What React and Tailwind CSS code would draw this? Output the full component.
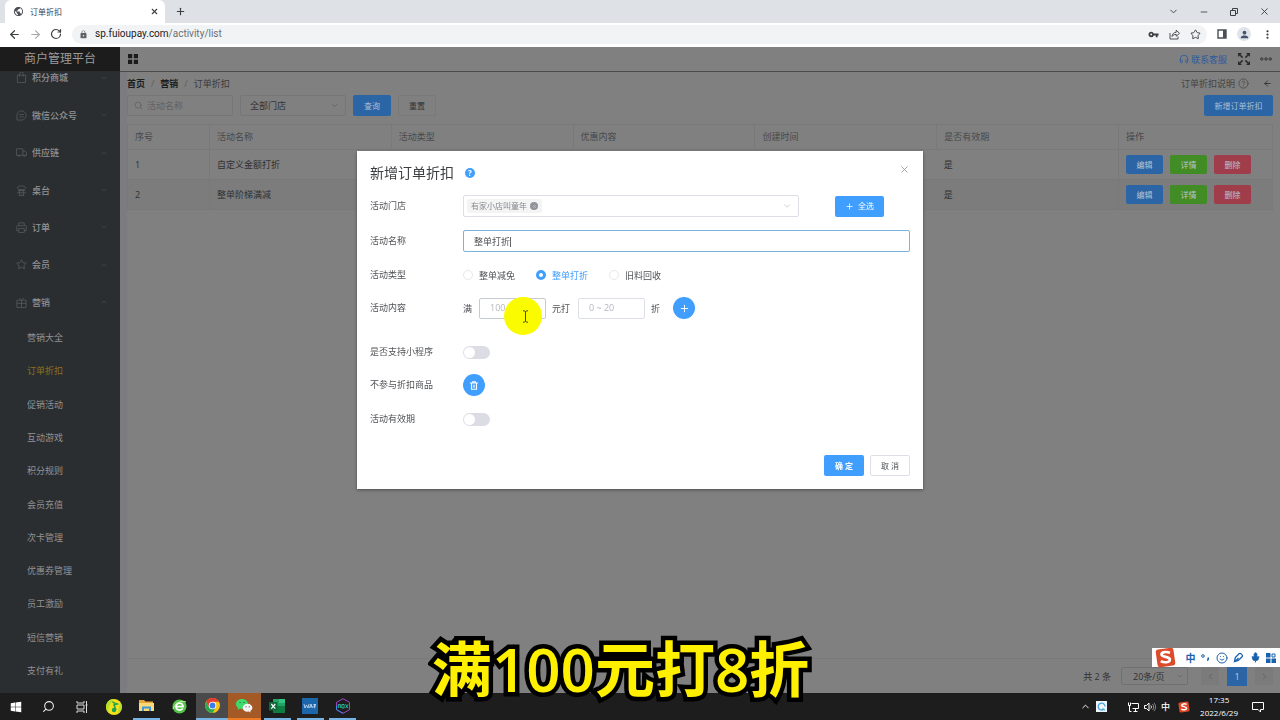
import React, { useState } from "react";
import {
  ArrowLeft,
  ArrowRight,
  ChevronDown,
  ChevronLeft,
  ChevronRight,
  ChevronUp,
  CircleHelp,
  Headphones,
  Mic,
  Minus,
  Plus,
  RotateCw,
  Search,
  Smile,
  Star,
  X,
} from "lucide-react";
import { FaWindows } from "react-icons/fa";
import { MdLock, MdPerson, MdPublic, MdVpnKey, MdMoreVert } from "react-icons/md";

// 12x12 outline icons of the side menu
const menu = [
  { label: "积分商城", path: "M1.5 3.5h9v8h-9zM4 5V2a2 2 0 0 1 4 0v3" },
  { label: "微信公众号", path: "M1 11h5a5 5 0 1 0-5-5zM3.5 5h5M3.5 7.5h5" },
  { label: "供应链", path: "M.5 2h7v7h-7zM7.5 4.5h2.5l1.5 2V9h-4M2 9a1.3 1.3 0 1 0 2.6 0M8 9a1.3 1.3 0 1 0 2.6 0" },
  { label: "桌台", path: "M1.5 3c0-1.2 2-2 4.500-2s4.500.8 4.500 2-2 2-4.500 2-4.500-.8-4.500-2zM2 6h8M1 8.500h10M4 5v6.500M8 5v6.500M3 11.500h6" },
  { label: "订单", path: "M3 4V1h6v3M1.500 4h9a.7.7 0 0 1 .7.7V9.500H9M3 9.500H.8V4.700a.7.7 0 0 1 .7-.7M3 7h6v4.500H3z" },
  { label: "会员", path: "M6 .8l1.600 3.300 3.600.5-2.600 2.500.6 3.600L6 9l-3.200 1.700.6-3.600L.8 4.600l3.600-.5z" },
  { label: "营销", path: "M1 3.500h10v8H1zM6 3.500v8M1 7h10M6 3.500L3.500 1M6 3.500L8.500 1", open: true },
];

const subMenu = [
  "营销大全",
  "订单折扣",
  "促销活动",
  "互动游戏",
  "积分规则",
  "会员充值",
  "次卡管理",
  "优惠券管理",
  "员工激励",
  "短信营销",
  "支付有礼",
];

const columns = ["序号", "活动名称", "活动类型", "优惠内容", "创建时间", "是否有效期", "操作"];

const rows = [
  { id: 1, name: "自定义金额打折", valid: "是" },
  { id: 2, name: "整单阶梯满减", valid: "是" },
];

function BrowserBar() {
  return (
    <header className="shrink-0 bg-[#dee1e6] text-[#3c4043]">
      <div className="flex h-[23px] items-center pl-[5px]">
        <div className="flex h-full w-[160px] items-center rounded-t-md bg-white pr-1.5 pl-2">
          <MdPublic size={11} className="text-[#4b4f54]" />
          <span className="ml-1.5 flex-1 text-[8px]">订单折扣</span>
          <button aria-label="关闭标签页">
            <X size={9} strokeWidth={3} />
          </button>
        </div>
        <button aria-label="新标签页" className="ml-2.5">
          <Plus size={11} strokeWidth={2.5} />
        </button>
        <div className="ml-auto flex items-center gap-5 pr-2.5">
          <button aria-label="搜索标签页"><ChevronDown size={11} /></button>
          <button aria-label="最小化"><Minus size={10} /></button>
          <button aria-label="还原">
            <svg width="10" height="10" viewBox="0 0 10 10" fill="none" stroke="currentColor">
              <path d="M1.5 3.5h5v5h-5zM3.5 3.5v-2h5v5h-2" />
            </svg>
          </button>
          <button aria-label="关闭"><X size={11} /></button>
        </div>
      </div>
      <div className="flex h-6 items-center bg-white pr-1.5 pb-0.5 pl-2">
        <div className="flex w-[64px] items-center gap-2">
          <button aria-label="后退"><ArrowLeft size={13} strokeWidth={2.2} /></button>
          <button aria-label="前进"><ArrowRight size={13} className="text-[#a7a9ac]" /></button>
          <button aria-label="刷新"><RotateCw size={12} strokeWidth={2.4} /></button>
        </div>
        <div className="flex h-[19px] flex-1 items-center rounded-full bg-[#f1f3f4] pr-1.5 pl-[7px]">
          <MdLock size={9} className="text-[#5f6368]" />
          <span className="ml-[7px] flex-1 font-['Roboto',sans-serif] text-[10px] text-[#6b6f74]">
            <span className="text-[#202124]">sp.fuioupay.com</span>/activity/list
          </span>
          <div className="flex items-center gap-2.5">
            <MdVpnKey size={11} />
            <svg width="11" height="11" viewBox="0 0 11 11" fill="none" stroke="currentColor" strokeWidth=".9">
              <path d="M1 4v6h8V7.500M3 7.500c.3-2.700 1.700-4 4.200-4.200V1.200L10.500 4.300 7.200 7.200V5.400C5.300 5.400 4 6 3 7.500z" />
            </svg>
            <Star size={11} />
          </div>
        </div>
        <div className="ml-2.5 flex items-center gap-2.5">
          <svg width="10" height="10" viewBox="0 0 10 10" aria-hidden="true">
            <path d="M1 1h8v8H1z" fill="none" stroke="#4b4f54" strokeWidth="1.4" />
            <path d="M6 1h3v8H6z" fill="#4b4f54" />
          </svg>
          <span className="flex size-[14px] items-center justify-center rounded-full bg-[#dfe3ea]">
            <MdPerson size={11} className="text-[#44546b]" />
          </span>
          <MdMoreVert size={13} />
        </div>
      </div>
    </header>
  );
}

function Sidebar() {
  return (
    <aside className="flex w-[120px] shrink-0 flex-col bg-[#2b2e31] text-[9px] text-[#919294]">
      <h1 className="flex h-6 shrink-0 items-center justify-center bg-[#1c1c1d] text-[12px] text-[#9b9b9b]">
        商户管理平台
      </h1>
      <nav className="flex min-h-0 flex-1 flex-col overflow-hidden pb-1.5">
        <div className="-mt-3 flex flex-1 flex-col">
          {menu.map(({ label, path, open }) => (
            <a key={label} href="#" className="flex min-h-0 grow-[9] basis-0 items-center pr-3 pl-4 font-medium">
              <svg width="11" height="11" viewBox="0 0 12 12" fill="none" stroke="#55595c" strokeWidth=".9">
                <path d={path} />
              </svg>
              <span className="ml-[5px] flex-1">{label}</span>
              {open ? (
                <ChevronUp size={8} className="text-[#4a4e51]" />
              ) : (
                <ChevronDown size={8} className="text-[#4a4e51]" />
              )}
            </a>
          ))}
          {subMenu.map((label) => (
            <a
              key={label}
              href="#"
              className={`flex min-h-0 grow-[8] basis-0 items-center pl-[27px] ${
                label === "订单折扣" ? "text-[#8a711c]" : ""
              }`}
            >
              {label}
            </a>
          ))}
        </div>
      </nav>
    </aside>
  );
}

function TopBar() {
  return (
    <div className="flex h-[25px] shrink-0 items-center border-b border-[#4c4c4c] pr-2 pl-2">
      <button aria-label="菜单">
        <svg width="10" height="10" viewBox="0 0 10 10" fill="#1b1b1b">
          <path d="M0 0h4.2v4.2H0zM5.8 0H10v4.2H5.8zM0 5.8h4.2V10H0zM5.8 5.8H10V10H5.8z" />
        </svg>
      </button>
      <a href="#" className="ml-auto flex items-center gap-0.5 text-[9px] text-[#2b5aa0]">
        <Headphones size={10} />
        联系客服
      </a>
      <button aria-label="全屏" className="ml-[11px]">
        <svg width="12" height="12" viewBox="0 0 12 12" fill="#2b2b2b" stroke="#2b2b2b">
          <path d="M0 0h4L0 4zM12 0v4L8 0zM0 12V8l4 4zM12 12H8l4-4z" stroke="none" />
          <path d="M1 1l3.6 3.6M11 1L7.4 4.6M1 11l3.6-3.6M11 11L7.4 7.4" strokeWidth="1.5" />
        </svg>
      </button>
      <button aria-label="更多" className="ml-2.5">
        <svg width="12" height="4" viewBox="0 0 12 4" fill="none" stroke="#333">
          <circle cx="1.8" cy="2" r="1.2" />
          <circle cx="6" cy="2" r="1.2" />
          <circle cx="10.2" cy="2" r="1.2" />
        </svg>
      </button>
    </div>
  );
}

function ListPage() {
  return (
    <div className="flex min-h-0 flex-1 flex-col border-l-[7px] border-[#7c7b80]">
      <div className="flex h-[23px] shrink-0 items-center pr-2 text-[9px]">
        <nav className="flex items-center gap-1.5 text-[#3a3a3a]">
          <a href="#" className="font-bold text-[#1e1e1e]">首页</a>
          <span className="text-[#5c5c5c]">/</span>
          <a href="#" className="font-bold text-[#1e1e1e]">营销</a>
          <span className="text-[#5c5c5c]">/</span>
          <span>订单折扣</span>
        </nav>
        <a href="#" className="ml-auto flex items-center gap-[3px] text-[#444]">
          订单折扣说明
          <CircleHelp size={11} strokeWidth={1.6} />
        </a>
        <button aria-label="返回" className="ml-3.5">
          <ArrowLeft size={9} className="text-[#222]" />
        </button>
      </div>

      {/* Filters */}
      <div className="flex h-[21px] shrink-0 items-center gap-[7px] pr-[7px] text-[8px]">
        <label className="flex h-full w-[106px] items-center gap-1 rounded-xs border border-[#767678] pl-1.5 text-[#606060]">
          <Search size={9} className="shrink-0" />
          <input
            aria-label="活动名称"
            placeholder="活动名称"
            className="w-full min-w-0 bg-transparent text-[9px] outline-none placeholder:text-[#626264]"
          />
        </label>
        <div className="relative h-full w-[106px]">
          <select
            aria-label="门店"
            className="h-full w-full appearance-none rounded-xs border border-[#767678] pl-[9px] text-[9px] text-[#323232]"
          >
            <option>全部门店</option>
          </select>
          <ChevronDown size={9} className="pointer-events-none absolute top-1.5 right-[7px] text-[#606060]" />
        </div>
        <button className="h-full w-[38px] rounded-xs bg-[#2b65a5] text-[#a9bfd8]">查询</button>
        <button className="h-full w-[38px] rounded-xs border border-[#797979] text-[#333]">重置</button>
        <button className="ml-auto h-full w-[69px] rounded-xs bg-[#2b65a5] text-[#a9bfd8]">新增订单折扣</button>
      </div>

      <div className="mt-2 min-h-0 flex-1 pr-[7px]">
        <table className="w-full table-fixed border-collapse border border-[#797979] text-left text-[9px] text-[#303132]">
          <thead>
            <tr className="h-[25px] border-b border-[#797979] text-[#48494b]">
              {columns.map((name, i) => (
                <th
                  key={name}
                  className={`border-r border-[#797979] pb-0.5 pl-[7px] font-normal ${
                    i === 0 ? "w-[82px]" : i === 6 ? "w-[154px]" : ""
                  }`}
                >
                  {name}
                </th>
              ))}
            </tr>
          </thead>
          <tbody>
            {rows.map((row) => (
              <tr key={row.id} className="h-[30px] border-b border-[#797979] even:bg-[#7c7c7c]">
                <td className="border-r border-[#797979] pl-[7px]">{row.id}</td>
                <td className="pl-[7px]">{row.name}</td>
                <td />
                <td />
                <td />
                <td className="pl-[7px]">{row.valid}</td>
                <td className="border-l border-[#797979] pl-[7px]">
                  <div className="flex gap-[7px] text-[8px] text-[#b8c4d2]">
                    <button className="h-[19px] w-[37px] rounded-xs bg-[#2b65a5]">编辑</button>
                    <button className="h-[19px] w-[37px] rounded-xs bg-[#428c25]">详情</button>
                    <button className="h-[19px] w-[37px] rounded-xs bg-[#a03d4a]">删除</button>
                  </div>
                </td>
              </tr>
            ))}
          </tbody>
        </table>
      </div>

      <div className="flex h-[35px] shrink-0 items-center justify-end border-t border-[#797979] pr-[7px] text-[9px] text-[#303132]">
        <span>共 2 条</span>
        <div className="relative ml-2.5 h-[18px] w-[67px]">
          <select
            aria-label="每页条数"
            className="h-full w-full appearance-none rounded-xs border border-[#707072] pl-[11px] text-[9px]"
          >
            <option>20条/页</option>
          </select>
          <ChevronDown size={8} className="pointer-events-none absolute top-[5px] right-1 text-[#606060]" />
        </div>
        <div className="ml-[13px] flex items-center gap-2">
          <button aria-label="上一页" className="flex size-[18px] items-center justify-center bg-[#7b7b7c]">
            <ChevronLeft size={9} className="text-[#5b5b5d]" />
          </button>
          <button className="h-[19px] w-5 bg-[#2b65a5] text-[#c3cbd4]">1</button>
          <button aria-label="下一页" className="flex size-[18px] items-center justify-center bg-[#7b7b7c]">
            <ChevronRight size={9} className="text-[#5b5b5d]" />
          </button>
        </div>
      </div>
    </div>
  );
}

function Switch({ id }) {
  return (
    <input
      id={id}
      type="checkbox"
      role="switch"
      className="relative h-[13px] w-[27px] appearance-none rounded-full bg-[#dcdce4] before:absolute before:top-px before:left-px before:size-[11px] before:rounded-full before:bg-white checked:bg-[#409eff] checked:before:left-[15px]"
    />
  );
}

function Row({ label, htmlFor, className = "mt-3", children }) {
  return (
    <div className={`flex h-[22px] items-center ${className}`}>
      <label htmlFor={htmlFor} className="w-[93px] shrink-0 pb-px">{label}</label>
      {children}
    </div>
  );
}

function DiscountDialog() {
  const [name, setName] = useState("整单打折");
  const [type, setType] = useState("整单打折");

  return (
    <div className="fixed inset-0 z-10 flex items-start justify-center pt-[151px]">
      <section
        role="dialog"
        aria-label="新增订单折扣"
        className="w-[566px] bg-white px-[13px] pb-[13px] text-[9px] text-[#505256] shadow-[0_1px_3px_rgba(0,0,0,0.4)]"
      >
        <div className="flex h-11 items-center">
          <h2 className="text-[14px] text-[#3c3e42]">新增订单折扣</h2>
          <span className="ml-[11px] flex size-[10px] items-center justify-center rounded-full bg-[#409eff] text-[8px] font-bold text-white">
            ?
          </span>
          <button aria-label="关闭" className="mb-2 ml-auto">
            <X size={11} strokeWidth={1.8} className="text-[#909399]" />
          </button>
        </div>

        <Row label="活动门店" htmlFor="store" className="mt-0">
          <div className="flex h-full w-[336px] items-center rounded-xs border border-[#dcdfe6] pr-1.5 pl-[3px]">
            <span className="flex h-[14px] items-center gap-[3px] rounded-xs bg-[#f4f4f5] px-1 text-[8px] text-[#85888e]">
              有家小店叫童年
              <button aria-label="移除" className="flex size-2 items-center justify-center rounded-full bg-[#909399]">
                <X size={5} className="text-[#ddd]" />
              </button>
            </span>
            <input id="store" role="combobox" aria-expanded="false" className="min-w-0 flex-1 outline-none" />
            <ChevronDown size={10} strokeWidth={1.6} className="text-[#b4b8c0]" />
          </div>
          <button className="ml-9 flex h-[21px] w-[49px] items-center justify-center gap-1 rounded-xs bg-[#409eff] text-[8px] text-white">
            <Plus size={9} />
            全选
          </button>
        </Row>

        <Row label="活动名称" htmlFor="name" className="mt-[13px]">
          <div className="flex h-full flex-1 items-center rounded-xs border border-[#7ab3dd] pl-2.5">
            <span className="relative flex-1">
              <input
                id="name"
                value={name}
                onChange={(e) => setName(e.target.value)}
                className="w-full outline-none"
              />
              <span className="absolute top-0.5 left-9 h-2.5 w-px bg-[#666]" />
            </span>
          </div>
        </Row>

        <Row label="活动类型">
          {["整单减免", "整单打折", "旧料回收"].map((item) => (
            <label
              key={item}
              className={`flex w-[73px] items-center gap-1.5 ${type === item ? "text-[#409eff]" : ""}`}
            >
              <input
                type="radio"
                name="type"
                checked={type === item}
                onChange={() => setType(item)}
                className="size-[10px] appearance-none rounded-full border border-[#e6e8ec] bg-white checked:border-[3px] checked:border-[#409eff]"
              />
              {item}
            </label>
          ))}
        </Row>

        <Row label="活动内容" htmlFor="amount" className="mt-[11px]">
          <div className="relative flex items-center gap-1.5">
            <span className="w-2.5">满</span>
            <input
              id="amount"
              placeholder="100"
              className="h-[21px] w-[67px] rounded-xs border border-[#c6cad1] pb-px pl-2.5 outline-none placeholder:text-[#b4b7bd]"
            />
            <span className="w-5">元打</span>
            <input
              aria-label="折扣"
              placeholder="0 ~ 20"
              className="h-[21px] w-[67px] rounded-xs border border-[#dcdfe6] pb-px pl-2.5 outline-none placeholder:text-[#b4b7bd]"
            />
            <span className="w-2.5">折</span>
            <button
              aria-label="添加"
              className="ml-1.5 flex size-[22px] items-center justify-center rounded-full bg-[#409eff] text-white"
            >
              <Plus size={11} />
            </button>
            {/* Pointer highlight */}
            <span className="absolute top-0 left-[41px] flex size-[38px] items-center justify-center rounded-full bg-[#fbfb00] pl-1">
              <svg width="7" height="13" viewBox="0 0 7 13" fill="none" stroke="#4c4c10">
                <path d="M1 .8c1.5 0 2.5.3 2.5 1.2C3.5 1.1 4.5.8 6 .8M3.5 2v9M1 12.2c1.5 0 2.5-.3 2.5-1.2 0 .9 1 1.2 2.5 1.2" />
              </svg>
            </span>
          </div>
        </Row>

        <Row label="是否支持小程序" htmlFor="mini" className="mt-[22px]">
          <Switch id="mini" />
        </Row>

        <Row label="不参与折扣商品" className="mt-[11px]">
          <button
            aria-label="选择商品"
            className="flex size-[22px] items-center justify-center rounded-full bg-[#409eff]"
          >
            <svg width="8" height="9" viewBox="0 0 8 9" fill="none" stroke="#fff">
              <path d="M0 2h8M2.7 2V.7h2.6V2M1.5 2.500v5.800h5V2.500" strokeWidth="1.1" />
              <path d="M3.4 3.700v3M4.600 3.700v3" strokeWidth=".7" />
            </svg>
          </button>
        </Row>

        <Row label="活动有效期" htmlFor="period">
          <Switch id="period" />
        </Row>

        <div className="mt-[25px] flex justify-end gap-1.5 text-[8px]">
          <button className="h-[21px] w-10 rounded-xs bg-[#409eff] font-bold text-white">确 定</button>
          <button className="h-[21px] w-10 rounded-xs border border-[#dcdfe6]">取 消</button>
        </div>
      </section>
    </div>
  );
}

function SogouLogo({ size }) {
  return (
    <svg width={size} height={size} viewBox="0 0 20 20">
      <rect x="1.5" y="1.5" width="17" height="17" rx="2.5" fill="#dc4a2a" transform="rotate(-8 10 10)" />
      <path
        d="M14.3 5.6C11 4.2 6 4.6 6.2 7.2c.2 2.8 8 1.6 8 4.7 0 3-5.5 3.3-8.7 1.6"
        fill="none"
        stroke="#fff"
        strokeWidth="2.5"
      />
    </svg>
  );
}

function ImeBar() {
  return (
    <div className="fixed right-0 bottom-[53px] z-20 flex h-[19px] w-[128px] items-center justify-between bg-white pr-1 pl-[3px] text-[#1b62ad]">
      <SogouLogo size={21} />
      <span className="ml-1 text-[10px] font-bold">中</span>
      <svg width="9" height="9" viewBox="0 0 9 9" fill="none" stroke="currentColor">
        <circle cx="2" cy="3" r="1.3" />
        <path d="M7 4.5c.6 1.2.2 2.4-.9 3" strokeWidth="1.6" />
      </svg>
      <Smile size={12} />
      <svg width="11" height="11" viewBox="0 0 11 11" fill="none" stroke="currentColor" strokeWidth="1.3">
        <path d="M1.5 9.5l.8-4 4-4c1-.8 3.8 1.5 3 3l-4 4zM2 9.5L5.5 6" />
      </svg>
      <Mic size={11} fill="currentColor" />
      <svg width="10" height="10" viewBox="0 0 10 10" fill="currentColor">
        <path d="M0 0h4.5v4.5H0zM0 5.5h4.5V10H0zM5.5 5.5H10V10H5.5z" />
        <path d="M6 1h3v3H6z" fill="none" stroke="currentColor" />
      </svg>
    </div>
  );
}

const tasks = [
  { name: "开始", icon: <FaWindows size={12} color="#fff" /> },
  { name: "搜索", icon: <Search size={13} color="#eee" className="-scale-x-100" /> },
  {
    name: "任务视图",
    icon: (
      <svg width="12" height="12" viewBox="0 0 12 12" fill="none" stroke="#ddd">
        <path d="M1 0v2h7V0M1 12v-2h7v2M1 4h7v4H1zM10.5 0v12M9.5 4h2" />
      </svg>
    ),
  },
  {
    name: "音乐",
    icon: (
      <svg width="16" height="16" viewBox="0 0 16 16">
        <circle cx="8" cy="8" r="8" fill="#f8e01c" />
        <path d="M8 0a8 8 0 0 0-5 14.2C1 9 5 4 8 0zM14.5 3.5c2 4 1.5 8-2 11.3-1-4 1-7 2-11.3z" fill="#b5e02c" />
        <path d="M6.5 2.5c.5 1.5 3 2 4.5 2.5L8 6l2 5" fill="none" stroke="#1da34e" strokeWidth="1.5" />
        <circle cx="8" cy="11" r="2.2" fill="#1da34e" />
      </svg>
    ),
  },
  {
    name: "文件资源管理器",
    bar: true,
    icon: (
      <svg width="15" height="13" viewBox="0 0 15 13">
        <path d="M0 1h5l1.5 1.5H14V12H0z" fill="#e9a83a" />
        <path d="M0 4h15v8H0z" fill="#fbd977" />
        <path d="M3 12V7.5h9V12h-2V9.5H5V12z" fill="#3f97d8" />
      </svg>
    ),
  },
  {
    name: "浏览器",
    icon: (
      <svg width="15" height="15" viewBox="0 0 15 15">
        <circle cx="7.5" cy="7.5" r="7" fill="#55c44a" />
        <path d="M4 7.6h7c0-5-7-4.5-7 0 0 4 5 4.3 6.8 2" fill="none" stroke="#fff" strokeWidth="1.7" />
        <path d="M1 10C3 4 9 1 14 3" fill="none" stroke="#c8f0a8" />
      </svg>
    ),
  },
  {
    name: "Chrome",
    bar: true,
    tile: "bg-[#4a4a4b]",
    icon: (
      <svg width="15" height="15" viewBox="0 0 16 16">
        <circle cx="8" cy="8" r="8" fill="#fbc116" />
        <path d="M1.1 4A8 8 0 0 1 15 4H8L4.6 10z" fill="#e33b2e" />
        <path d="M1.1 4A8 8 0 0 0 8 16l3.5-6H4.6z" fill="#2da94f" />
        <circle cx="8" cy="8" r="4" fill="#fff" />
        <circle cx="8" cy="8" r="3.1" fill="#3b7ded" />
      </svg>
    ),
  },
  {
    name: "微信",
    bar: true,
    tile: "bg-[#a35a26]",
    line: "bg-[#ef7a22]",
    icon: (
      <svg width="17" height="14" viewBox="0 0 17 14">
        <path d="M6 0C2.5 0 0 2.2 0 5c0 1.6.9 3 2.2 3.9L1.7 11l2.2-1.2C8.5 10.6 12 8.2 12 5c0-2.8-2.5-5-6-5z" fill="#3ddb6d" />
        <path d="M11.5 4.8C8.8 4.8 6.6 6.5 6.6 8.8c0 2.7 2.9 4.4 6.2 3.8l1.9 1-.4-1.7c1.3-.8 2.1-1.9 2.1-3.1 0-2.3-2.2-4-4.9-4z" fill="#f4f4f4" />
        <path d="M3.5 3.5h1M7.5 3.5h1M9.5 7.8h1M12.7 7.8h1" stroke="#444" />
      </svg>
    ),
  },
  {
    name: "Excel",
    bar: true,
    icon: (
      <svg width="16" height="14" viewBox="0 0 16 14">
        <path d="M4 0h12v14H4z" fill="#21a366" />
        <path d="M10 0h6v4h-6z" fill="#33c481" />
        <path d="M4 7h12v7H4z" fill="#107c41" />
        <path d="M0 3h8.5v8.5H0z" fill="#0e6b38" />
        <path d="M2.3 5l4 4.6M6.3 5l-4 4.6" stroke="#fff" strokeWidth="1.2" />
      </svg>
    ),
  },
  {
    name: "水印",
    bar: true,
    icon: (
      <svg width="16" height="16" viewBox="0 0 16 16">
        <path d="M0 0h16v16H0z" fill="#1c66ac" />
        <path d="M2 6l1 4 1.5-3L6 10l1-4M7.5 10L9 6l1.500 4M8 8.800h2.300M11.500 6.500H14M12.700 6v4l-1.200-1M11.500 8H14" fill="none" stroke="#cfe3f5" strokeWidth=".8" />
      </svg>
    ),
  },
  {
    name: "Nox",
    bar: true,
    icon: (
      <svg width="16" height="16" viewBox="0 0 16 16" fill="none">
        <path d="M8 .7l6.5 3.6v7.4L8 15.3l-6.5-3.6V4.3z" stroke="#a245c4" />
        <path d="M1.5 8v3.7L8 15.3" stroke="#3b8de0" />
        <path d="M3.3 10V6.5h2V10M6.8 6.5h2.3V10H6.8zM10.5 6.3l2.5 3.9M13 6.3l-2.5 3.9" stroke="#27c7a5" strokeWidth=".9" />
      </svg>
    ),
  },
];

function Taskbar() {
  return (
    <footer className="flex h-[27px] shrink-0 items-center bg-[#1d1d1e] text-white">
      <div className="flex h-full w-[359px]">
        {tasks.map((task) => (
          <button
            key={task.name}
            aria-label={task.name}
            className={`flex flex-1 flex-col items-center ${task.tile || ""}`}
          >
            <span className="flex flex-1 items-center">{task.icon}</span>
            {task.bar && <span className={`h-0.5 ${task.tile ? "w-full" : "w-[27px]"} ${task.line || "bg-[#76b4e6]"}`} />}
          </button>
        ))}
      </div>
      <div className="ml-auto flex items-center pr-4">
        <ChevronUp size={11} />
        <span className="ml-[5px] flex size-[11px] items-center justify-center bg-[#eef5fa]">
          <svg width="9" height="9" viewBox="0 0 9 9" fill="none" stroke="#4aa3d8" strokeWidth="1.3">
            <path d="M7 7A3.4 3.4 0 1 1 8 4.5M5.5 6.5l2.5 1.5" />
          </svg>
        </span>
        <svg width="11" height="10" viewBox="0 0 11 10" fill="none" stroke="currentColor" className="ml-[21px]">
          <path d="M3.5 1.5h7v5h-6M5.5 9.5h4M7.5 6.5v3M.5.5v3h2v-3M1.5 3.5v6h2" />
        </svg>
        <svg width="12" height="10" viewBox="0 0 12 10" fill="none" stroke="currentColor" className="ml-[5px]">
          <path d="M.5 3.5h2L5 1v8L2.5 6.5h-2z" />
          <path d="M6.8 3.5c.8 1 .8 2 0 3" />
          <path d="M8.5 2c1.5 2 1.5 4 0 6M10 .8c2 2.7 2 5.7 0 8.400" stroke="#888" />
        </svg>
        <span className="ml-[5px] text-[9px] font-medium">中</span>
        <span className="ml-2"><SogouLogo size={12} /></span>
        <div className="ml-2.5 pb-px text-center text-[8px] leading-[13px]">
          <div>17:35</div>
          <div>2022/6/29</div>
        </div>
        <svg width="12" height="12" viewBox="0 0 12 12" fill="none" stroke="currentColor" className="ml-3.5">
          <path d="M.5 1.5h11v7h-3V11L6 8.5H.5z" />
        </svg>
      </div>
    </footer>
  );
}

export default function App() {
  return (
    <div className="flex h-screen flex-col overflow-hidden bg-[#808080] font-['Open_Sans','Noto_Sans_CJK_SC',sans-serif] leading-none">
      <BrowserBar />
      <div className="flex min-h-0 flex-1">
        <Sidebar />
        <main className="flex min-w-0 flex-1 flex-col">
          <TopBar />
          <ListPage />
        </main>
      </div>
      <Taskbar />
      <DiscountDialog />
      <ImeBar />
      <p className="fixed bottom-[21px] left-[432px] z-30 text-[60px] leading-[60px] font-semibold text-[#fff000] [-webkit-text-stroke:9px_#000] [paint-order:stroke_fill]">
        满100元打8折
      </p>
    </div>
  );
}
